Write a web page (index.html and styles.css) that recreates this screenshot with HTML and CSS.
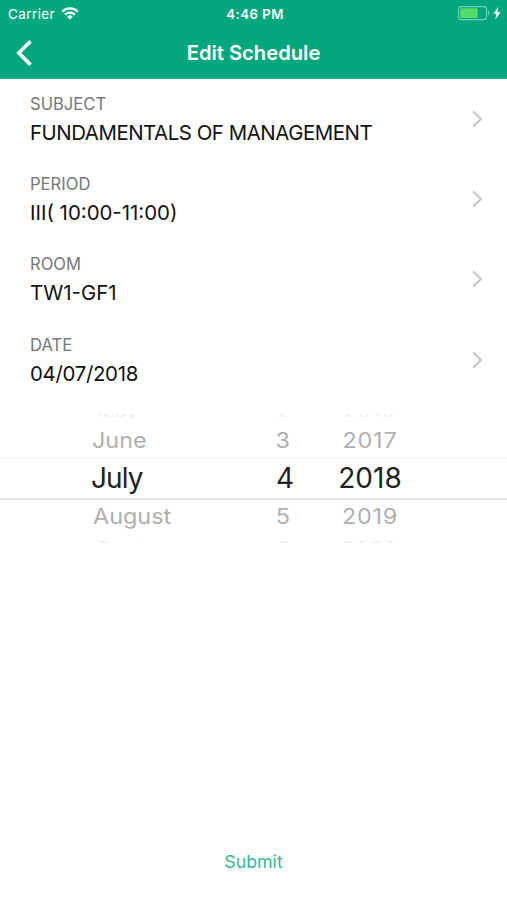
FILE: index.html
```
<!DOCTYPE html>
<html lang="en">
  <head>
    <meta charset="UTF-8" />
    <meta name="viewport" content="width=device-width, initial-scale=1.0" />
    <title>Edit Schedule</title>
    <link rel="stylesheet" href="styles.css">
  </head>
  <body>
    <header>
      <div class="status">
        <div class="carrier">
          <span class="carrier-name">Carrier</span>
          <svg width="18" height="13" viewBox="0 0 18 13" fill="none" stroke="#fff" stroke-width="2.3">
            <path d="M1.2 4.6a11.2 11.2 0 0 1 15.6 0" />
            <path d="M4 7.7a7.2 7.2 0 0 1 10 0" />
            <path d="M6.2 9.7a4 4 0 0 1 5.6 0L9 12.4z" fill="#fff" stroke="none" />
          </svg>
        </div>
        <span class="time">4:46 PM</span>
        <svg class="battery" width="44" height="15" viewBox="0 0 44 15">
          <rect x="0.6" y="0.6" width="28" height="13" rx="2.8" fill="none" stroke="#75cfb5" stroke-width="1.1" />
          <rect x="2.3" y="2.3" width="17.4" height="9.6" rx="1" fill="#53dc68" />
          <path d="M30 5c1.8.6 1.8 3.8 0 4.4z" fill="#75cfb5" />
          <path d="M40.4 0.8L35.4 7.8h3l-1.2 6L42.6 6.3h-3.2z" fill="#fff" />
        </svg>
      </div>
      <div class="navbar">
        <svg class="back" width="18" height="28" viewBox="0 0 18 28" fill="none" stroke="#fff" stroke-width="3.6">
          <path d="M15.5 2.2L3.8 14l11.7 11.8" />
        </svg>
        <h1>Edit Schedule</h1>
      </div>
    </header>

    <main>
      <div class="field">
        <div>
          <div class="label">SUBJECT</div>
          <div class="value subject">FUNDAMENTALS OF MANAGEMENT</div>
        </div>
        <svg class="chevron" width="11" height="18" viewBox="0 0 11 18"><path d="M1.2 1.5L9 9l-7.8 7.5" /></svg>
      </div>
      <div class="field">
        <div>
          <div class="label">PERIOD</div>
          <div class="value period">III( 10:00-11:00)</div>
        </div>
        <svg class="chevron" width="11" height="18" viewBox="0 0 11 18"><path d="M1.2 1.5L9 9l-7.8 7.5" /></svg>
      </div>
      <div class="field">
        <div>
          <div class="label">ROOM</div>
          <div class="value room">TW1-GF1</div>
        </div>
        <svg class="chevron" width="11" height="18" viewBox="0 0 11 18"><path d="M1.2 1.5L9 9l-7.8 7.5" /></svg>
      </div>
      <div class="field">
        <div>
          <div class="label">DATE</div>
          <div class="value date">04/07/2018</div>
        </div>
        <svg class="chevron" width="11" height="18" viewBox="0 0 11 18"><path d="M1.2 1.5L9 9l-7.8 7.5" /></svg>
      </div>

      <div class="picker">
        <div class="row edge top"><span>May</span><span>2</span><span>2016</span></div>
        <div class="row near above"><span>June</span><span>3</span><span>2017</span></div>
        <div class="row selected"><span>July</span><span>4</span><span>2018</span></div>
        <div class="row near below"><span>August</span><span>5</span><span>2019</span></div>
        <div class="row edge bottom"><span>Sept</span><span>6</span><span>2020</span></div>
      </div>
    </main>

    <button type="button">Submit</button>
  </body>
</html>
```

FILE: styles.css
```
body {
  font-family: "Inter", "Liberation Sans", sans-serif;
  margin: 0;
  height: 900px;
  display: flex;
  flex-direction: column;
  background-color: #fff;
  color: #111;
  overflow: hidden;
}

header {
  box-sizing: border-box;
  height: 79px;
  background-color: #02a77d;
  border-bottom: 1px solid #20b18c;
  color: white;
}

.status {
  display: grid;
  grid-template-columns: 1fr auto 1fr;
  align-items: center;
  height: 27px;
  padding: 0 5px 0 8px;
  font-size: 13.5px;
}

.carrier {
  display: flex;
  align-items: center;
  gap: 6px;
  letter-spacing: 0.4px;
}

.time {
  font-weight: 600;
  font-size: 13.2px;
  letter-spacing: 0.5px;
}

.battery {
  justify-self: end;
}

.navbar {
  display: grid;
  grid-template-columns: 34px 1fr 34px;
  align-items: center;
  height: 51px;
}

.back {
  margin-left: 15px;
}

h1 {
  margin: 0;
  font-size: 20.2px;
  font-weight: 600;
  text-align: center;
}

.field {
  display: flex;
  justify-content: space-between;
  box-sizing: border-box;
  height: 80.2px;
  padding: 14px 24px 0 30px;
}

.label {
  font-size: 16.6px;
  line-height: 22px;
  color: #777;
}

.value {
  font-size: 20.4px;
  line-height: 35px;
}

.subject {
  letter-spacing: -0.45px;
}

.date {
  letter-spacing: -0.3px;
}

.chevron {
  margin-top: 17px;
  fill: none;
  stroke: #c4c4c7;
  stroke-width: 1.9;
}

.picker {
  display: flex;
  flex-direction: column;
  height: 129px;
  margin-top: 14px;
  overflow: hidden;
}

.row {
  display: grid;
  grid-template-columns: 140px 63px 152px;
  box-sizing: border-box;
  padding-left: 91px;
  flex-shrink: 0;
  align-items: center;
}

.row span:nth-child(2) {
  text-align: right;
}

.row span:nth-child(3) {
  text-align: center;
}

.near {
  height: 40px;
  font-size: 23.4px;
  line-height: 28px;
  color: #b0b0b0;
}

/* side rows are squashed like the turn of a wheel */
.near span {
  transform: scaleY(0.92);
}

.near span:nth-child(2),
.edge span:nth-child(2) {
  padding-right: 4px;
}

.near span:nth-child(3) {
  letter-spacing: 0.8px;
}

.above {
  padding-top: 8px;
}

.above span:first-child {
  padding-left: 1px;
}

.below {
  padding-bottom: 5px;
}

.below span:first-child {
  padding-left: 2px;
}

.selected {
  height: 43px;
  border-top: 1px solid #eee;
  border-bottom: 2px solid #e4e4e4;
  font-size: 28px;
  color: #222;
}

.selected span:first-child {
  letter-spacing: -0.9px;
}

.edge {
  height: 3px;
  font-size: 20px;
  line-height: 20px;
  color: #f0f0f0;
  overflow: hidden;
}

.edge span:first-child {
  padding-left: 6px;
}

.edge span:nth-child(3) {
  letter-spacing: 1.5px;
}

.top {
  align-content: end;
}

.top span {
  margin-bottom: -4px;
}

.bottom {
  align-content: start;
}

.bottom span {
  margin-top: -1px;
}

button {
  margin-top: auto;
  margin-bottom: 26px;
  padding: 0;
  border: none;
  background: none;
  font-family: inherit;
  font-size: 17.8px;
  line-height: 24px;
  color: #35ba94;
  cursor: pointer;
}
```
